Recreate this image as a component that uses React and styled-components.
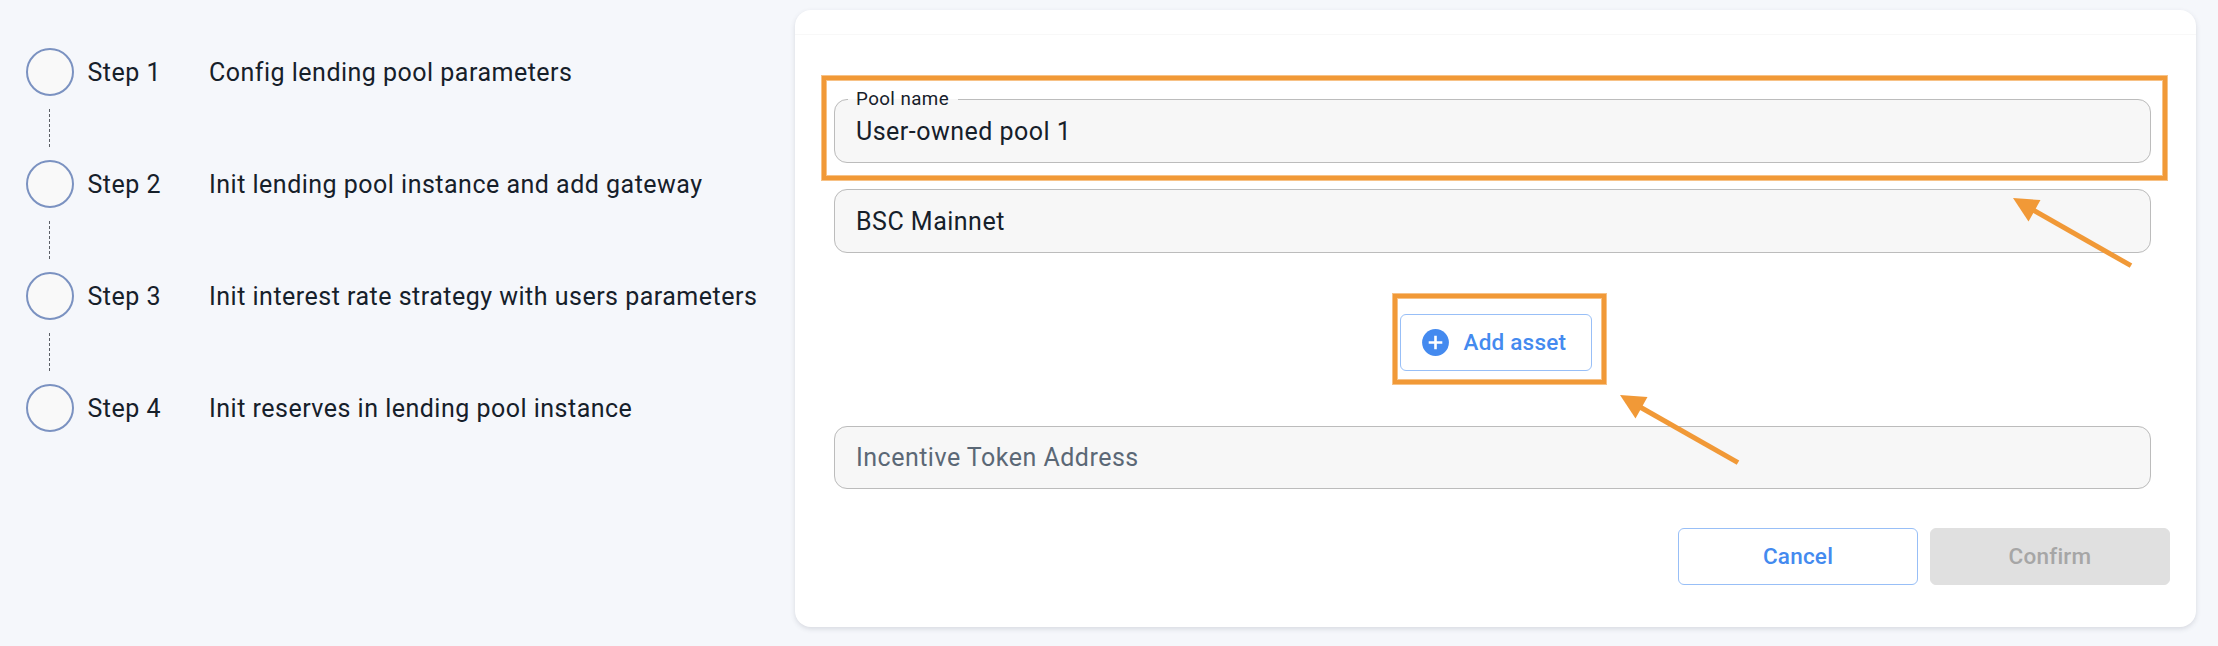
import React from "react";
import styled, { createGlobalStyle } from "styled-components";

const GlobalStyle = createGlobalStyle`
  * { box-sizing: border-box; }
  body {
    margin: 0;
    background: #f5f7fb;
    font-family: Roboto, "Liberation Sans", sans-serif;
    font-size: 25px;
    letter-spacing: 0.49px;
    color: #16202a;
  }
`;

const Page = styled.main`
  position: relative;
  display: flex;
  align-items: flex-start;
  width: 2218px;
  height: 646px;
  padding: 10px 22px 0 26px;
  overflow: hidden;
`;

const Steps = styled.ol`
  flex: 0 0 769px;
  margin: 0;
  padding: 38px 0 0;
  list-style: none;
`;

const Step = styled.li`
  display: grid;
  grid-template-columns: 61.5px 121.5px 1fr;
  grid-template-rows: 48px;
  align-items: center;
  white-space: nowrap;
`;

const StepText = styled.span`
  padding-top: 1px;
  line-height: 29px;
`;

const Circle = styled.span`
  width: 48px;
  height: 48px;
  border: 2px solid #7b92c1;
  border-radius: 50%;
  background: #f9f9f9;
`;

const Connector = styled.li`
  width: 1px;
  height: 38px;
  margin: 13px 0 13px 23px;
  background: repeating-linear-gradient(to bottom, #5c6066 0 3px, transparent 3px 5px);
`;

const Card = styled.section`
  flex: 1;
  height: 617px;
  border-radius: 16px;
  background: #fff;
  box-shadow: 0 2px 5px rgba(60, 70, 90, 0.16);
`;

const CardHeader = styled.header`
  height: 25px;
  border-bottom: 1px solid #f8f8f8;
`;

const Form = styled.form`
  display: flex;
  flex-direction: column;
  padding: 64px 45px 0 39px;
`;

const Field = styled.fieldset`
  min-width: 0;
  height: ${(p) => p.$height || 64}px;
  margin: 0 0 ${(p) => p.$gap}px;
  padding: 0 21px;
  border: 1px solid #bcbcbc;
  border-radius: 13px;
  background: #f7f7f7;
  position: relative;
`;

const FieldLabel = styled.label`
  position: absolute;
  left: 13px;
  top: -12px;
  padding: 0 9px 0 8px;
  font-size: 18.75px;
  line-height: 22px;
  letter-spacing: 0.42px;
  background: linear-gradient(#fff 0 11px, #f7f7f7 11px);
`;

const Input = styled.input`
  display: block;
  width: 100%;
  height: ${(p) => (p.$raised ? 61 : 62)}px;
  padding: ${(p) => (p.$raised ? 0 : 1)}px 0 0;
  border: 0;
  outline: 0;
  background: transparent;
  font: inherit;
  letter-spacing: inherit;
  color: inherit;
  &::placeholder {
    color: #5b6876;
    opacity: 1;
  }
`;

const Button = styled.button`
  display: flex;
  align-items: center;
  justify-content: center;
  width: 240px;
  height: 57px;
  padding: 0 0 1px;
  border: 1px solid ${(p) => (p.disabled ? "#e0e0e0" : "#98bff7")};
  border-radius: 6px;
  background: ${(p) => (p.disabled ? "#e0e0e0" : "#fff")};
  color: ${(p) => (p.disabled ? "#a6a6a6" : "#448aef")};
  font: 500 22.5px/38px Roboto, "Liberation Sans", sans-serif;
  letter-spacing: 0.22px;
`;

const AddButton = styled(Button)`
  justify-content: flex-start;
  width: 192px;
  padding-left: 20.5px;
`;

const AddRow = styled.div`
  display: flex;
  padding-left: 566px;
  margin-bottom: 55px;
`;

const AddIcon = styled.svg`
  width: 27px;
  height: 27px;
  margin-right: 15px;
`;

const Actions = styled.div`
  display: flex;
  justify-content: flex-end;
  gap: 12px;
  margin: 0 -19px 0 0;
`;

const Highlight = styled.div`
  position: absolute;
  left: ${(p) => p.$x}px;
  top: ${(p) => p.$y}px;
  width: ${(p) => p.$w}px;
  height: ${(p) => p.$h}px;
  border: 4px solid #f19937;
  box-shadow: 0 0 0 1px rgba(241, 153, 55, 0.6), inset 0 0 0 1px rgba(241, 153, 55, 0.6);
  pointer-events: none;
`;

const Arrow = styled.svg`
  position: absolute;
  left: ${(p) => p.$x}px;
  top: ${(p) => p.$y}px;
  width: 122px;
  height: 74px;
  pointer-events: none;
`;

const steps = [
  "Config lending pool parameters",
  "Init lending pool instance and add gateway",
  "Init interest rate strategy with users parameters",
  "Init reserves in lending pool instance",
];

function PointerArrow({ x, y }) {
  return (
    <Arrow $x={x} $y={y} viewBox="0 0 122 74" fill="#f19937">
      <path d="M0 0L27.5 2L15.5 23.5Z" />
      <path d="M20 12L118 67.7" stroke="#f19937" strokeWidth="5" />
    </Arrow>
  );
}

export default function App() {
  return (
    <Page>
      <GlobalStyle />
      <Steps>
        {steps.map((text, i) => (
          <React.Fragment key={text}>
            {i > 0 && <Connector aria-hidden="true" />}
            <Step>
              <Circle />
              <StepText>Step {i + 1}</StepText>
              <StepText>{text}</StepText>
            </Step>
          </React.Fragment>
        ))}
      </Steps>
      <Card>
        <CardHeader />
        <Form>
          <Field $gap={26}>
            <FieldLabel htmlFor="pool">Pool name</FieldLabel>
            <Input id="pool" defaultValue="User-owned pool 1" />
          </Field>
          <Field $gap={61}>
            <Input aria-label="Network" defaultValue="BSC Mainnet" />
          </Field>
          <AddRow>
            <AddButton type="button">
              <AddIcon viewBox="0 0 27 27">
                <circle cx="13.5" cy="13.5" r="13.4" fill="#448aef" />
                <path d="M13.5 6.7V20.3M6.7 13.5H20.3" stroke="#fff" strokeWidth="2.6" />
              </AddIcon>
              Add asset
            </AddButton>
          </AddRow>
          <Field $gap={39} $height={63}>
            <Input $raised aria-label="Incentive Token Address" placeholder="Incentive Token Address" />
          </Field>
          <Actions>
            <Button type="button">Cancel</Button>
            <Button type="button" disabled>Confirm</Button>
          </Actions>
        </Form>
      </Card>
      <Highlight $x={822} $y={76} $w={1345} $h={104} />
      <Highlight $x={1393} $y={294} $w={213} $h={90} />
      <PointerArrow x={2013} y={198} />
      <PointerArrow x={1620} y={395} />
    </Page>
  );
}
